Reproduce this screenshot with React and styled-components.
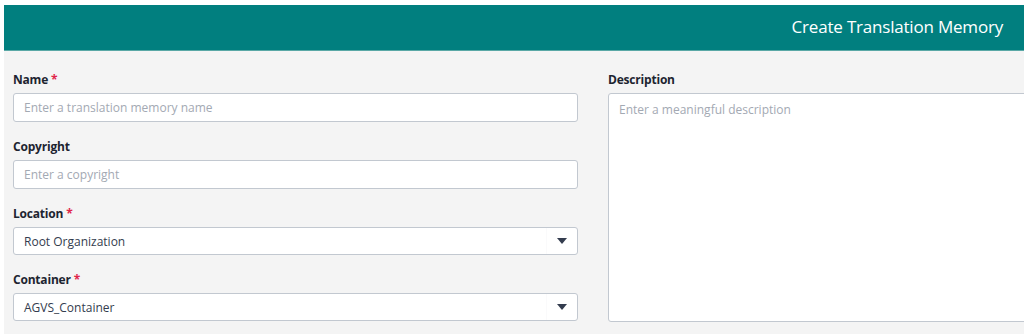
import styled, { createGlobalStyle } from "styled-components";

const GlobalStyle = createGlobalStyle`
    html, body {
        margin: 0;
        padding: 0;
        background: #ffffff;
        overflow: hidden;
    }
    body {
        font-family: "Open Sans", "Liberation Sans", sans-serif;
    }
`;

const Caret = () => (
    <svg width="10" height="6" viewBox="0 0 10 6">
        <path d="M0 0 L10 0 L5 6 Z" fill="#333c4e" />
    </svg>
);

const Field = ({ label, required, grow, children }) => (
    <FieldWrap $grow={grow}>
        <Label>
            {label}
            {required && <Star>*</Star>}
        </Label>
        {children}
    </FieldWrap>
);

const App = () => {
    return (
        <Page>
            <GlobalStyle />
            <Header>
                <Title>Create Translation Memory</Title>
            </Header>
            <Content>
                <Column>
                    <Field label="Name" required>
                        <Input placeholder="Enter a translation memory name" />
                    </Field>
                    <Field label="Copyright">
                        <Input placeholder="Enter a copyright" />
                    </Field>
                    <Field label="Location" required>
                        <Select>
                            <span>Root Organization</span>
                            <Toggle><Caret /></Toggle>
                        </Select>
                    </Field>
                    <Field label="Container" required>
                        <Select>
                            <span>AGVS_Container</span>
                            <Toggle><Caret /></Toggle>
                        </Select>
                    </Field>
                </Column>
                <Column>
                    <Field label="Description" grow>
                        <TextArea placeholder="Enter a meaningful description" />
                    </Field>
                </Column>
            </Content>
        </Page>
    );
};

const Page = styled.div`
    padding: 5px 0 0 4px;
    width: 1020px;
    height: 329px;
    overflow: hidden;
`;

const Header = styled.header`
    height: 45px;
    background-color: #017f7f;
    border-bottom: 1px solid #5aa8a6;
    display: flex;
    align-items: center;
    justify-content: flex-end;
    padding-right: 21px;
`;

const Title = styled.h1`
    margin: 0 0 2px;
    color: #ffffff;
    font-size: 17px;
    font-weight: 400;
    letter-spacing: -0.2px;
`;

const Content = styled.main`
    box-sizing: border-box;
    background-color: #f4f4f4;
    display: grid;
    grid-template-columns: 565px 450px;
    column-gap: 30px;
    padding: 21px 0 12px 9px;
    height: 283px;
`;

const Column = styled.div`
    display: flex;
    flex-direction: column;
    gap: 17px;
`;

const FieldWrap = styled.div`
    display: flex;
    flex-direction: column;
    gap: 5px;
    flex: ${(p) => (p.$grow ? 1 : "none")};
`;

const Label = styled.label`
    font-size: 12px;
    font-weight: 700;
    color: #1d2430;
    line-height: 16px;
    letter-spacing: -0.2px;
`;

const Star = styled.span`
    color: #e0264a;
    margin-left: 3px;
`;

const Input = styled.input`
    box-sizing: border-box;
    height: 29px;
    border: 1px solid #c2c8d0;
    border-radius: 3px;
    background: #ffffff;
    padding: 0 10px;
    font-family: inherit;
    font-size: 12px;
    outline: none;

    &::placeholder {
        color: #a3a9b3;
    }
`;

const Select = styled.div`
    box-sizing: border-box;
    height: 28px;
    border: 1px solid #c2c8d0;
    border-radius: 3px;
    background: #ffffff;
    padding-left: 10px;
    display: flex;
    align-items: center;
    justify-content: space-between;
    font-size: 12px;
    color: #333c4e;
`;

const Toggle = styled.div`
    width: 30px;
    height: 100%;
    border-left: 1px solid #fafafb;
    display: flex;
    align-items: center;
    justify-content: center;
`;

const TextArea = styled.textarea`
    box-sizing: border-box;
    flex: 1;
    resize: none;
    border: 1px solid #c2c8d0;
    border-radius: 3px;
    background: #ffffff;
    padding: 7px 10px;
    font-family: inherit;
    font-size: 12px;
    outline: none;

    &::placeholder {
        color: #a3a9b3;
    }
`;

export default App;
